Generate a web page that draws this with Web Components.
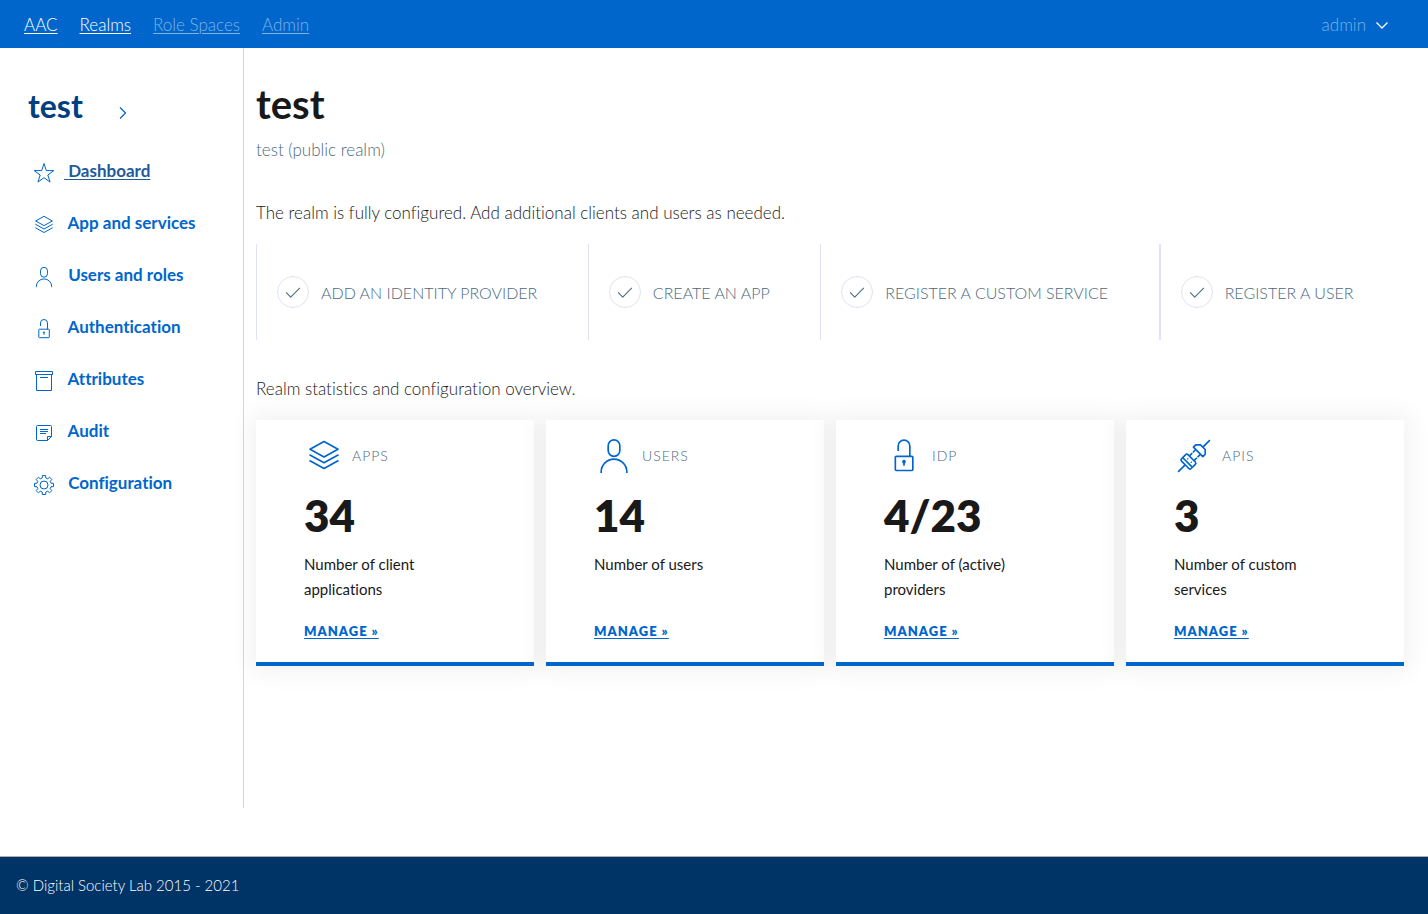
<!DOCTYPE html>
<html lang="en">
<head>
<meta charset="utf-8">
<meta name="viewport" content="width=device-width, initial-scale=1">
<title>AAC - test</title>
<style>
  html, body { margin: 0; }
  body {
    font-family: Lato, "Liberation Sans", sans-serif;
    font-variant-ligatures: none;
    font-size: 17px;
    font-weight: 300;
    line-height: 28px;
    color: #19191a;
    background: #fff;
    --primary: #06c;
    --muted: #4c6a80;
    --rule: #e0e4f2;
  }
</style>
</head>
<body>
<aac-app></aac-app>
<script>
const ICONS = {
  star: '<path d="M12 2.5l2.3 7.1h7.5l-6 4.4 2.3 7.1-6.1-4.4-6.1 4.4 2.3-7.1-6-4.4h7.5z"/>',
  layers: '<path d="M12 3.3l8.4 4.7-8.4 4.6L3.600 8zM3.300 11.200l8.700 4.800 8.700-4.800M3.300 14.700l8.700 4.800 8.700-4.800"/>',
  user: '<rect x="8.500" y="2.300" width="7" height="9.900" rx="3.500"/><path d="M4.300 22.200v-.6a7.700 7.700 0 0 1 15.400 0v.6"/>',
  unlock: '<rect x="6.800" y="12.200" width="10.500" height="8.500" rx=".6"/><path d="M8.500 9V6a3.500 3.500 0 0 1 7 0v6.200M12 15.500v2.300"/><circle cx="12" cy="15.400" r=".6"/>',
  archive: '<path d="M3.500 2.500h17v3h-17zM4.500 5.500v16h15v-16M8 8.500h8"/>',
  note: '<path d="M5.500 4.500h13a1 1 0 0 1 1 1v10l-4 4h-10a1 1 0 0 1-1-1v-13a1 1 0 0 1 1-1zM15.500 19.500v-4h4M8 8.500h8M8 10.500h8M8 12.500h6"/>',
  gear: '<path d="M10.200 5l.2-2.500h3.200l.2 2.500 1.900.8 1.900-1.600 2.200 2.200-1.600 1.900.8 1.900 2.500.2v3.200l-2.500.2-.8 1.900 1.600 1.900-2.200 2.200-1.900-1.600-1.900.8-.2 2.500h-3.200l-.2-2.500-1.900-.8-1.900 1.600-2.200-2.200 1.600-1.900-.8-1.900-2.500-.2v-3.200l2.500-.2.8-1.900-1.600-1.900 2.200-2.200 1.900 1.600z"/><circle cx="12" cy="12" r="4"/>',
  plug: '<g transform="rotate(-45 12 12)"><path d="M-1.500 12H4.500M19.500 12h6M6.500 8v8M10 10h2.500M10 14h2.500M13 10h2.500M13 14h2.500"/><rect x="4.500" y="7.900" width="5.500" height="8.200" rx="1"/><path d="M15.500 8h2l2 2v4l-2 2h-2z"/><path d="M8.200 10.200v.6M8.200 13.200v.6"/></g>',
  check: '<path d="M4.500 12.500l5 5 10-10"/>',
  right: '<path d="M9 6.500l5.500 5.500L9 17.500"/>',
  down: '<path d="M6.500 9.500l5.500 5.500 5.500-5.500"/>'
};

const define = (name, html, setup) => {
  const template = document.createElement('template');
  template.innerHTML = html;
  customElements.define(name, class extends HTMLElement {
    connectedCallback() {
      if (this.shadowRoot) return;
      this.attachShadow({ mode: 'open' }).append(template.content.cloneNode(true));
      if (setup) setup(this, this.shadowRoot);
    }
  });
};

define('aac-icon', `
  <style>
    :host { display: block; flex: none; width: var(--icon-size, 24px); height: var(--icon-size, 24px); }
    svg { display: block; width: 100%; height: 100%; fill: none; stroke: currentColor; stroke-width: var(--icon-stroke, 1); stroke-linejoin: round; }
  </style>
  <svg viewBox="0 0 24 24" aria-hidden="true"></svg>`,
  (host, root) => { root.querySelector('svg').innerHTML = ICONS[host.getAttribute('name')]; });

define('aac-header', `
  <style>
    :host { display: block; background: var(--primary); color: #fff; }
    header { display: flex; align-items: center; height: 48px; padding: 2px 34px 0 24px; box-sizing: border-box; }
    nav { display: flex; gap: 22px; margin-left: 22px; }
    a { color: inherit; text-underline-offset: 2px; text-decoration-thickness: 1px; }
    .dim { color: #7fb2e5; }
    button { display: flex; align-items: center; gap: 4px; margin-left: auto; padding: 0; border: 0; background: none; color: #7fb2e5; font: inherit; cursor: pointer; }
    aac-icon { color: #fff; --icon-stroke: 1.3; }
  </style>
  <header>
    <a href="#home">AAC</a>
    <nav aria-label="Main">
      <a href="#realms">Realms</a>
      <a class="dim" href="#spaces">Role Spaces</a>
      <a class="dim" href="#admin">Admin</a>
    </nav>
    <button type="button" aria-haspopup="true">admin <aac-icon name="down"></aac-icon></button>
  </header>`);

define('aac-nav-item', `
  <style>
    :host { display: block; }
    a { display: flex; align-items: center; height: 52px; gap: 8px; color: var(--primary); font-weight: 700; text-decoration: none; }
    aac-icon { margin-top: 4px; }
    :host([active]) span { color: #1f5a9b; text-decoration: underline; text-decoration-thickness: 1px; text-underline-offset: 2px; }
  </style>
  <a><aac-icon></aac-icon><span>&nbsp;<slot></slot></span></a>`,
  (host, root) => {
    root.querySelector('a').href = host.getAttribute('href');
    const icon = document.createElement('aac-icon');
    icon.setAttribute('name', host.getAttribute('icon'));
    root.querySelector('aac-icon').replaceWith(icon);
  });

define('aac-sidebar', `
  <style>
    :host { display: block; flex: none; width: 243px; border-right: 1px solid #d6d7d9; }
    .realm { display: flex; align-items: center; gap: 28px; padding: 34px 0 0 28px; height: 48px; }
    h2 { margin: 0; font-size: 32px; line-height: 48px; font-weight: 700; color: #004080; }
    button { padding: 14px 0 0; border: 0; background: none; color: var(--primary); cursor: pointer; --icon-stroke: 1.2; }
    nav { padding: 15px 0 0 32px; }
  </style>
  <div class="realm">
    <h2>test</h2>
    <button type="button" aria-label="Change realm"><aac-icon name="right"></aac-icon></button>
  </div>
  <nav aria-label="Realm">
    <aac-nav-item icon="star" href="#dashboard" active>Dashboard</aac-nav-item>
    <aac-nav-item icon="layers" href="#apps">App and services</aac-nav-item>
    <aac-nav-item icon="user" href="#users">Users and roles</aac-nav-item>
    <aac-nav-item icon="unlock" href="#authentication">Authentication</aac-nav-item>
    <aac-nav-item icon="archive" href="#attributes">Attributes</aac-nav-item>
    <aac-nav-item icon="note" href="#audit">Audit</aac-nav-item>
    <aac-nav-item icon="gear" href="#configuration">Configuration</aac-nav-item>
  </nav>`);

define('aac-step', `
  <style>
    :host { display: flex; flex: 1 0 auto; align-items: center; gap: 12px; height: 96px; padding-left: 20px; border-left: 1px solid var(--rule); color: var(--muted); font-size: 16px; text-transform: uppercase; }
    :host(:last-child) { border-left-width: 2px; }
    .mark { display: grid; place-items: center; width: 30px; height: 30px; border: 1px solid var(--rule); border-radius: 50%; --icon-size: 22px; --icon-stroke: 1.2; }
    .label { padding-top: 2px; }
  </style>
  <span class="mark"><aac-icon name="check"></aac-icon></span>
  <span class="label"><slot></slot></span>`);

define('aac-card', `
  <style>
    :host { display: flex; flex-direction: column; padding: 16px 48px 19px; border-bottom: 4px solid var(--primary); background: #fff; box-shadow: 0 0 24px 5px rgba(0, 0, 0, .06); font-size: 15px; }
    .top { display: flex; align-items: center; gap: 8px; color: var(--primary); --icon-size: 40px; }
    h3 { margin: 0; font-size: 14px; line-height: 24px; font-weight: 300; letter-spacing: 1px; color: var(--muted); }
    .count { margin: 11px 0 9px; font-size: 44px; line-height: 56px; font-weight: 800; }
    .text { flex: 1; max-width: 136px; margin: 0 0 17px; line-height: 25px; font-weight: 400; }
    a { align-self: flex-start; font-size: 13px; line-height: 24px; font-weight: 800; letter-spacing: 1px; color: var(--primary); text-underline-offset: 2px; }
  </style>
  <div class="top"><aac-icon></aac-icon><h3></h3></div>
  <p class="count"></p>
  <p class="text"><slot></slot></p>
  <a>MANAGE »</a>`,
  (host, root) => {
    const icon = document.createElement('aac-icon');
    icon.setAttribute('name', host.getAttribute('icon'));
    root.querySelector('aac-icon').replaceWith(icon);
    root.querySelector('h3').textContent = host.getAttribute('heading');
    root.querySelector('.count').textContent = host.getAttribute('count');
    root.querySelector('a').href = host.getAttribute('href');
  });

define('aac-dashboard', `
  <style>
    :host { display: block; flex: 1; min-width: 0; padding: 32px 24px 0 12px; }
    h1 { margin: 0 0 8px; font-size: 40px; line-height: 48px; font-weight: 700; }
    p { margin: 0; }
    .subtitle { color: var(--muted); }
    .lead { margin: 35px 0 17px; }
    .steps { display: flex; flex-wrap: wrap; }
    .cards { display: grid; grid-template-columns: repeat(4, minmax(0, 1fr)); gap: 12px; }
  </style>
  <h1>test</h1>
  <p class="subtitle">test (public realm)</p>
  <p class="lead">The realm is fully configured. Add additional clients and users as needed.</p>
  <div class="steps">
    <aac-step>Add an identity provider</aac-step>
    <aac-step>Create an app</aac-step>
    <aac-step>Register a custom service</aac-step>
    <aac-step>Register a user</aac-step>
  </div>
  <p class="lead">Realm statistics and configuration overview.</p>
  <div class="cards">
    <aac-card icon="layers" heading="APPS" count="34" href="#apps">Number of client applications</aac-card>
    <aac-card icon="user" heading="USERS" count="14" href="#users">Number of users</aac-card>
    <aac-card icon="unlock" heading="IDP" count="4/23" href="#idp">Number of (active) providers</aac-card>
    <aac-card icon="plug" heading="APIS" count="3" href="#apis">Number of custom services</aac-card>
  </div>`);

define('aac-footer', `
  <style>
    :host { display: block; border-top: 1px solid #b1b1b3; background: #036; color: #fff; }
    footer { padding: 16px 16px 17px; font-size: 15px; line-height: 24px; }
  </style>
  <footer>© Digital Society Lab 2015 - 2021</footer>`);

define('aac-app', `
  <style>
    :host { display: flex; flex-direction: column; min-height: 100vh; }
    main { display: flex; flex: 1; margin-bottom: 48px; }
  </style>
  <aac-header></aac-header>
  <main>
    <aac-sidebar></aac-sidebar>
    <aac-dashboard></aac-dashboard>
  </main>
  <aac-footer></aac-footer>`);
</script>
</body>
</html>
